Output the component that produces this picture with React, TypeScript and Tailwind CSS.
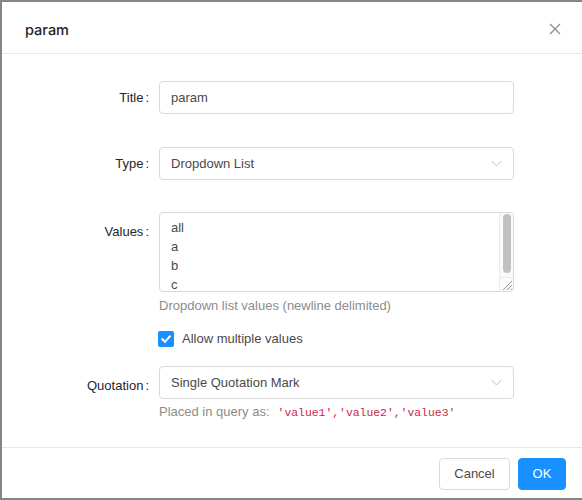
import React from "react";

function Chevron() {
  return (
    <svg width="11" height="7" viewBox="0 0 11 7" className="shrink-0">
      <polyline points="0.5,0.8 5.5,6 10.5,0.8" fill="none" stroke="#bfbfbf" strokeWidth="1" />
    </svg>
  );
}

function Label({ children, top }: { children: React.ReactNode; top?: boolean }) {
  return (
    <div
      className={
        top
          ? "w-[147px] shrink-0 text-right text-[13px] leading-[39px] text-[#262626]"
          : "w-[147px] shrink-0 text-right text-[13px] text-[#262626] self-center"
      }
    >
      {children}
      <span className="ml-[2px]">:</span>
    </div>
  );
}

export default function App() {
  return (
    <div className="w-[582px] h-[500px] bg-[#858585] pt-[2px] pl-[2px] pb-[2px] overflow-hidden font-['Liberation_Sans',Arial,sans-serif]">
      <div className="w-full h-full bg-white flex flex-col">
        {/* Header */}
        <div className="h-[52px] shrink-0 border-b border-[#e8e8e8] flex items-center justify-between pl-[23px] pr-[21px] pt-[4px]">
          <div className="text-[14.5px] text-[#1f1f1f] font-medium font-['Inter',Arial,sans-serif]">param</div>
          <svg width="12" height="12" viewBox="0 0 12 12" className="-mt-[2px]">
            <line x1="1" y1="1" x2="11" y2="11" stroke="#8c8c8c" strokeWidth="1.2" />
            <line x1="11" y1="1" x2="1" y2="11" stroke="#8c8c8c" strokeWidth="1.2" />
          </svg>
        </div>

        {/* Body */}
        <div className="flex-1 pt-[27px]">
          {/* Title */}
          <div className="flex">
            <Label>Title</Label>
            <div className="ml-[10px] w-[355px] h-[33px] border border-[#d9d9d9] rounded-[4px] px-[11px] flex items-center text-[13px] text-[#4a4a4a]">
              param
            </div>
          </div>

          {/* Type */}
          <div className="flex mt-[33px]">
            <Label>Type</Label>
            <div className="ml-[10px] w-[355px] h-[33px] border border-[#d9d9d9] rounded-[4px] pl-[11px] pr-[11px] flex items-center justify-between text-[13px] text-[#4a4a4a]">
              <span>Dropdown List</span>
              <Chevron />
            </div>
          </div>

          {/* Values */}
          <div className="flex mt-[32px]">
            <Label top>Values</Label>
            <div className="ml-[10px] w-[355px]">
              <div className="h-[80px] border border-[#d9d9d9] rounded-[4px] flex overflow-hidden">
                <div className="flex-1 px-[11px] pt-[5px] text-[13px] leading-[19px] text-[#4a4a4a] overflow-hidden">
                  <div>all</div>
                  <div>a</div>
                  <div>b</div>
                  <div>c</div>
                </div>
                <div className="w-[14px] shrink-0 border-l border-[#ebebeb] bg-[#fafafa] flex flex-col">
                  <div className="flex-1 flex justify-center pt-[1px]">
                    <div className="w-[8px] h-[59px] rounded-full bg-[#c1c1c1]" />
                  </div>
                  <div className="h-[14px] border-t border-[#ebebeb] relative">
                    <svg width="13" height="13" viewBox="0 0 13 13" className="block">
                      <line x1="3" y1="12" x2="12" y2="3" stroke="#8a8a8a" strokeWidth="0.9" />
                      <line x1="7" y1="12" x2="12" y2="7" stroke="#8a8a8a" strokeWidth="0.9" />
                      <line x1="10.5" y1="12" x2="12" y2="10.5" stroke="#8a8a8a" strokeWidth="0.9" />
                    </svg>
                  </div>
                </div>
              </div>
              <div className="mt-[4px] text-[13px] leading-[19px] text-[#8c8c8c]">
                Dropdown list values (newline delimited)
              </div>
            </div>
          </div>

          {/* Checkbox */}
          <div className="flex mt-[16px]">
            <div className="w-[147px] shrink-0" />
            <div className="ml-[9px] flex items-center h-[16px]">
              <div className="w-[16px] h-[16px] rounded-[2px] bg-[#1890ff] flex items-center justify-center">
                <svg width="12" height="12" viewBox="0 0 12 12">
                  <polyline points="2.3,6.2 5,8.8 9.8,3.4" fill="none" stroke="#ffffff" strokeWidth="2" strokeLinecap="square" />
                </svg>
              </div>
              <span className="ml-[8px] text-[13px] text-[#4a4a4a]">Allow multiple values</span>
            </div>
          </div>

          {/* Quotation */}
          <div className="flex mt-[19px]">
            <Label top>Quotation</Label>
            <div className="ml-[10px] w-[355px]">
              <div className="h-[33px] border border-[#d9d9d9] rounded-[4px] pl-[11px] pr-[11px] flex items-center justify-between text-[13px] text-[#4a4a4a]">
                <span>Single Quotation Mark</span>
                <Chevron />
              </div>
              <div className="mt-[3px] text-[13px] leading-[19px] text-[#8c8c8c] flex items-baseline">
                <span>Placed in query as:</span>
                <span className="ml-[8px] font-['Liberation_Mono',monospace] text-[11.4px] text-[#cc1f4a]">
                  'value1','value2','value3'
                </span>
              </div>
            </div>
          </div>
        </div>

        {/* Footer */}
        <div className="h-[51px] shrink-0 border-t border-[#e8e8e8] flex justify-end items-start pt-[10px] pr-[16px] gap-[8px]">
          <button className="w-[71px] h-[32px] border border-[#d9d9d9] rounded-[4px] bg-white text-[13px] text-[#4a4a4a]">
            Cancel
          </button>
          <button className="w-[48px] h-[32px] rounded-[4px] bg-[#1890ff] border border-[#1890ff] text-[13px] text-white">
            OK
          </button>
        </div>
      </div>
    </div>
  );
}
